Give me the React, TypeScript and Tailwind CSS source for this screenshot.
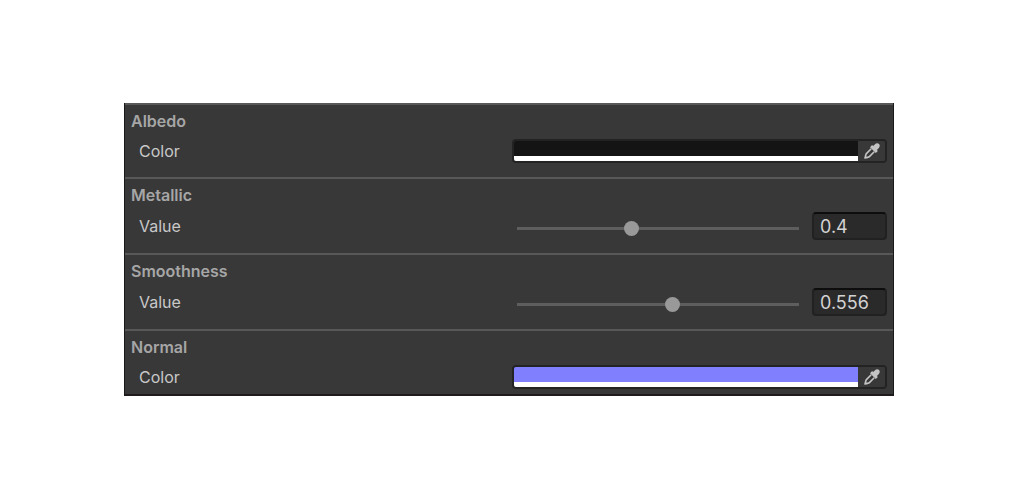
import { useState, type ReactNode } from "react";

function EyedropperIcon() {
  return (
    <svg viewBox="0 0 16 16" className="size-4" aria-hidden="true">
      <path
        fill="#c4c4c4"
        d="M10.800 1.500C12.100.1 13.900-.1 15 1s1 2.900-.4 4.200L12.900 6.900l1 1-2.100 2.100L6 4.200l2.100-2.100 1 1z"
      />
      <path
        fill="none"
        stroke="#c4c4c4"
        strokeWidth="1.600"
        strokeLinejoin="round"
        d="M7.200 5.800 2.400 10.600c-.9.900-.5 2.100-1.400 4.400 2.300-.9 3.500-.5 4.400-1.400l4.800-4.800"
      />
    </svg>
  );
}

function Section({ title, children }: { title: string; children: ReactNode }) {
  return (
    <section className="border-t-2 border-[#585858] pt-1 pl-1.5 pr-1.5">
      <h2 className="text-base leading-6 font-semibold text-[#a6a6a6]">{title}</h2>
      {children}
    </section>
  );
}

function ColorRow({ id, swatch }: { id: string; swatch: string }) {
  return (
    <div className="grid grid-cols-[381fr_375fr] items-center pt-1.5">
      <label htmlFor={id} className="pl-2 text-base leading-6 text-[#c8c8c8]">
        Color
      </label>
      <div className="flex h-6 overflow-hidden rounded border-2 border-[#232323]">
        <button id={id} type="button" className="flex min-w-0 flex-1 flex-col">
          <span className={`w-full flex-1 ${swatch}`} />
          <span className="h-[5px] w-full bg-white" />
        </button>
        <button
          type="button"
          aria-label="Pick color"
          className="flex w-[27px] items-center justify-center bg-[#383838]"
        >
          <EyedropperIcon />
        </button>
      </div>
    </div>
  );
}

function SliderRow({ id, initial }: { id: string; initial: string }) {
  const [value, setValue] = useState(initial);
  return (
    <div className="grid grid-cols-[381fr_375fr] items-center pt-[5px]">
      <label htmlFor={id} className="pl-2 text-base leading-6 text-[#c8c8c8]">
        Value
      </label>
      <div className="flex items-center gap-[13px] pl-[5px]">
        <input
          id={id}
          type="range"
          min="0"
          max="1"
          step="0.001"
          value={value}
          onChange={(e) => setValue(e.target.value)}
          className="mt-1 h-[15px] min-w-0 flex-1 appearance-none bg-transparent [&::-webkit-slider-runnable-track]:h-[3px] [&::-webkit-slider-runnable-track]:bg-[#5e5e5e] [&::-webkit-slider-thumb]:-mt-1.5 [&::-webkit-slider-thumb]:size-[15px] [&::-webkit-slider-thumb]:appearance-none [&::-webkit-slider-thumb]:rounded-full [&::-webkit-slider-thumb]:bg-[#999999]"
        />
        <input
          type="text"
          aria-label="Value"
          value={value}
          onChange={(e) => setValue(e.target.value)}
          className="h-7 w-[75px] rounded border-2 border-[#212121] border-t-[#0d0d0d] bg-[#2a2a2a] px-1.5 text-lg leading-6 text-[#d2d2d2]"
        />
      </div>
    </div>
  );
}

export default function App() {
  return (
    <main className="bg-white pt-[103px] pr-[125px] pb-[104px] pl-[124px] font-['Inter',sans-serif]">
      <div className="border-x border-b-2 border-x-[#191919] border-b-[#1e1a1e] bg-[#383838]">
        <Section title="Albedo">
          <div className="pb-3.5">
            <ColorRow id="albedo-color" swatch="bg-[#141414]" />
          </div>
        </Section>
        <Section title="Metallic">
          <div className="pb-[13px]">
            <SliderRow id="metallic-value" initial="0.4" />
          </div>
        </Section>
        <Section title="Smoothness">
          <div className="pb-[13px]">
            <SliderRow id="smoothness-value" initial="0.556" />
          </div>
        </Section>
        <Section title="Normal">
          <div className="pb-[5px]">
            <ColorRow id="normal-color" swatch="bg-[#8080ff]" />
          </div>
        </Section>
      </div>
    </main>
  );
}
